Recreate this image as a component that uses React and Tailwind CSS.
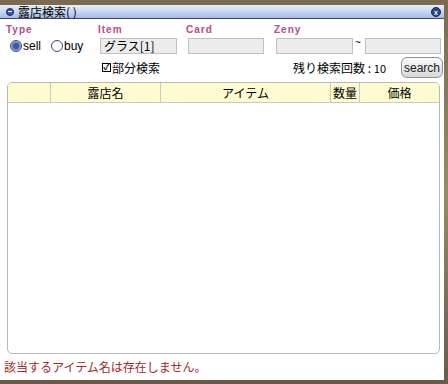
export default function App() {
  const font = { fontFamily: '"Liberation Sans", "Noto Sans CJK JP", sans-serif' };
  const jp = { fontFamily: '"Noto Sans CJK JP", "Liberation Sans", sans-serif' };
  return (
    <div className="w-[448px] h-[384px] bg-gradient-to-b from-[#7a6a50] via-[#9a8a6a] to-[#6a5a48] pt-[5px] pr-[4px] pb-[4px] flex overflow-hidden" style={font}>
      <div className="flex-1 flex flex-col bg-white">
        {/* title bar */}
        <div className="h-[14px] flex items-center bg-gradient-to-b from-[#e8eefa] via-[#cad8f2] to-[#a4bae6] border-b border-[#404860] relative">
          <div className="ml-[6px] w-[8px] h-[8px] rounded-full bg-[#3a5aa0] border border-[#1c2c60] flex items-center justify-center">
            <div className="w-[4px] h-[1px] bg-white" />
          </div>
          <span className="ml-[4px] text-[12px] leading-none text-black" style={jp}>露店検索( )</span>
          <div className="absolute right-[3px] top-[2px] w-[10px] h-[10px] rounded-full bg-[#2c4488] border border-[#15245a] flex items-center justify-center text-white text-[7px] leading-none font-bold">x</div>
        </div>

        {/* labels */}
        <div className="relative h-[19px] text-[10px] font-bold text-[#b84a86] tracking-[1px]">
          <span className="absolute left-[6px] top-[3px]">Type</span>
          <span className="absolute left-[98px] top-[3px]">Item</span>
          <span className="absolute left-[186px] top-[3px]">Card</span>
          <span className="absolute left-[274px] top-[3px]">Zeny</span>
        </div>

        {/* inputs */}
        <div className="flex items-center h-[16px]">
          <div className="w-[100px] flex items-center text-[12px] text-black">
            <span className="ml-[10px] w-[12px] h-[12px] rounded-full border border-[#3a4a70] bg-[radial-gradient(circle,#3858a8_35%,#a8b8e0_70%)]" />
            <span className="ml-[1px]">sell</span>
            <span className="ml-[10px] w-[12px] h-[12px] rounded-full border border-[#3a4a70] bg-white" />
            <span className="ml-[1px]">buy</span>
          </div>
          <div className="w-[77px] h-[16px] bg-[#ececec] border border-[#c0c0c0] text-[12px] leading-[14px] pl-[3px] text-black" style={jp}>グラス[1]</div>
          <div className="ml-[11px] w-[76px] h-[16px] bg-[#ececec] border border-[#c0c0c0]" />
          <div className="ml-[12px] w-[77px] h-[16px] bg-[#ececec] border border-[#c0c0c0]" />
          <span className="w-[12px] text-[10px] self-start leading-none pl-[2px]">~</span>
          <div className="w-[76px] h-[16px] bg-[#ececec] border border-[#c0c0c0]" />
        </div>

        {/* options */}
        <div className="flex items-center h-[21px] mt-[3px]">
          <span className="ml-[102px] w-[9px] h-[9px] border border-black flex items-center justify-center text-[9px] leading-none font-bold">✓</span>
          <span className="ml-[1px] text-[12px] text-black" style={jp}>部分検索</span>
          <span className="ml-auto text-[12px] text-black" style={jp}>残り検索回数 : <span className="text-[11px]">10</span></span>
          <button className="ml-[15px] mr-[1px] w-[42px] h-[21px] rounded-[6px] border border-[#909090] bg-gradient-to-b from-[#fafafa] to-[#d8d8d8] text-[12px] text-[#202020] leading-none">search</button>
        </div>

        {/* table */}
        <div className="ml-[7px] mr-[4px] mt-[4px] h-[272px] border border-[#b8b8b8] rounded-[5px] overflow-hidden">
          <div className="flex h-[20px] bg-[#fffbd0] border-b border-[#c8c8c8] text-[12px] text-black" style={jp}>
            <div className="w-[43px] border-r border-[#c8c8c8]" />
            <div className="w-[110px] border-r border-[#c8c8c8] flex items-center justify-center">露店名</div>
            <div className="w-[170px] border-r border-[#c8c8c8] flex items-center justify-center">アイテム</div>
            <div className="w-[29px] border-r border-[#c8c8c8] flex items-center justify-center">数量</div>
            <div className="flex-1 flex items-center justify-center">価格</div>
          </div>
        </div>

        {/* message */}
        <div className="mt-[5px] ml-[4px] text-[12px] leading-[16px] text-[#a02828]" style={jp}>該当するアイテム名は存在しません。</div>
      </div>
    </div>
  );
}
